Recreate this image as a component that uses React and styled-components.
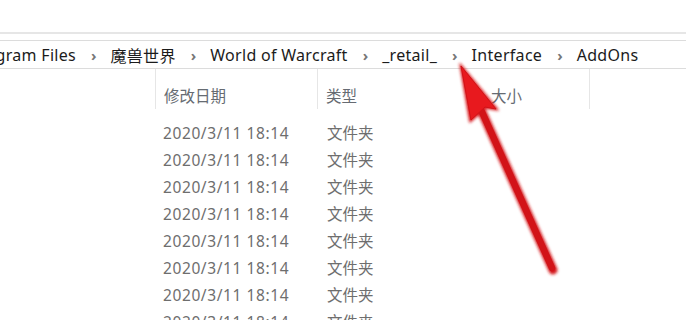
import React from "react";
import styled, { createGlobalStyle } from "styled-components";

const GlobalStyle = createGlobalStyle`
  html, body {
    margin: 0;
    padding: 0;
    background: #ffffff;
  }
  body {
    font-family: "Noto Sans", "Noto Sans CJK SC", sans-serif;
  }
`;

const Window = styled.div`
  position: relative;
  width: 686px;
  height: 320px;
  overflow: hidden;
  background: #ffffff;
`;

const TopBar = styled.div`
  height: 32px;
  border-bottom: 2px solid #e6e6e6;
`;

const AddressBar = styled.div`
  margin-top: 6px;
  height: 27px;
  border-top: 1px solid #dcdcdc;
  border-bottom: 1px solid #dcdcdc;
  display: flex;
  align-items: center;
  margin-left: -31px;
  white-space: nowrap;
`;

const Crumb = styled.span`
  font-size: 16px;
  letter-spacing: 0.3px;
  color: #1b1b1b;
`;

const Chevron = styled.span`
  font-size: 15px;
  font-weight: 700;
  color: #777777;
  margin: 0 14px 0 15px;
`;

const List = styled.div`
  padding-left: 155px;
`;

const HeaderRow = styled.div`
  display: flex;
  height: 40px;
`;

const HeaderCell = styled.div`
  width: ${(p) => p.$w}px;
  padding: 17px 0 0 ${(p) => p.$pad ?? 8}px;
  box-sizing: border-box;
  font-size: 15.5px;
  line-height: 20px;
  color: #666b72;
  border-left: ${(p) => (p.$line ? "1px solid #e6e6e6" : "none")};
  border-right: ${(p) => (p.$endLine ? "1px solid #e6e6e6" : "none")};
`;

const Rows = styled.div`
  padding-top: 10px;
`;

const Row = styled.div`
  display: flex;
  height: 27px;
  align-items: center;
`;

const Cell = styled.div`
  width: ${(p) => p.$w}px;
  padding-left: ${(p) => p.$pad ?? 8}px;
  box-sizing: border-box;
  font-size: 15.5px;
  letter-spacing: ${(p) => (p.$cjk ? "0" : "0.6px")};
  color: #6e6e6e;
`;

const ArrowLayer = styled.svg`
  position: absolute;
  left: 0;
  top: 0;
  pointer-events: none;
`;

const crumbs = ["Program Files", "魔兽世界", "World of Warcraft", "_retail_", "Interface", "AddOns"];
const rows = Array.from({ length: 8 }, () => ({ date: "2020/3/11 18:14", type: "文件夹" }));

export default function App() {
  return (
    <Window>
      <GlobalStyle />
      <TopBar />
      <AddressBar>
        {crumbs.map((c, i) => (
          <React.Fragment key={c}>
            {i > 0 && <Chevron>›</Chevron>}
            <Crumb>{c}</Crumb>
          </React.Fragment>
        ))}
      </AddressBar>
      <List>
        <HeaderRow>
          <HeaderCell $w={162} $line>修改日期</HeaderCell>
          <HeaderCell $w={162} $line>类型</HeaderCell>
          <HeaderCell $w={111} $pad={12} $endLine>大小</HeaderCell>
        </HeaderRow>
        <Rows>
          {rows.map((r, i) => (
            <Row key={i}>
              <Cell $w={162}>{r.date}</Cell>
              <Cell $w={162} $pad={10} $cjk>{r.type}</Cell>
            </Row>
          ))}
        </Rows>
      </List>
      <ArrowLayer width="686" height="320" viewBox="0 0 686 320">
        <defs>
          <filter id="glow" x="-20%" y="-20%" width="140%" height="140%">
            <feGaussianBlur stdDeviation="1.6" />
          </filter>
        </defs>
        <g filter="url(#glow)" fill="#e01b1f" stroke="#d4151a" strokeLinejoin="round">
          <line x1="482" y1="112" x2="553" y2="270" strokeWidth="9" strokeLinecap="round" />
          <polygon points="460,64 498,110 486,108 470,122" strokeWidth="1.5" />
        </g>
        <g fill="#e8191e" stroke="#d21318" strokeLinejoin="round">
          <line x1="482" y1="112" x2="552" y2="268" strokeWidth="6.5" strokeLinecap="round" />
          <polygon points="461,66 496,109 485,107 471,120" strokeWidth="1" />
        </g>
      </ArrowLayer>
    </Window>
  );
}
